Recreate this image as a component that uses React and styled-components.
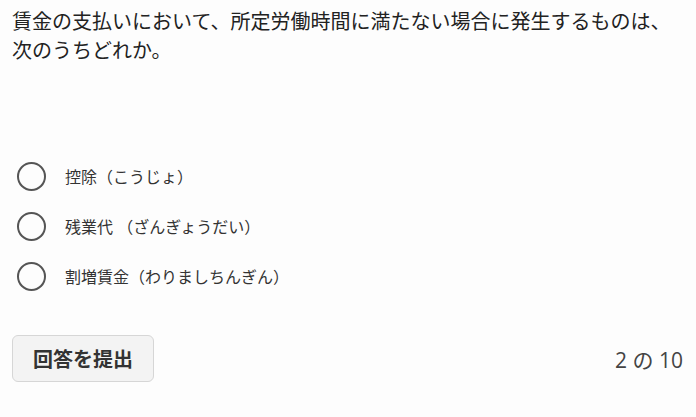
import React from "react"
import styled, { createGlobalStyle } from "styled-components"

const GlobalStyle = createGlobalStyle`
  html, body {
    margin: 0;
    padding: 0;
    background: #fdfdfd;
  }
  body {
    font-family: "Open Sans", "Noto Sans CJK JP", sans-serif;
    color: #222;
  }
`

const Page = styled.div`
  display: flex;
  flex-direction: column;
  padding: 7px 12px 0;
  min-height: 417px;
  box-sizing: border-box;
`

const Question = styled.p`
  margin: 0;
  font-size: 20px;
  line-height: 29px;
  color: #222;
`

const Options = styled.div`
  display: flex;
  flex-direction: column;
  margin-top: 86px;
`

const Option = styled.label`
  display: flex;
  align-items: center;
  gap: 19px;
  height: 50px;
  padding-left: 5px;
  cursor: pointer;
`

const Radio = styled.span`
  width: 29px;
  height: 29px;
  box-sizing: border-box;
  border: 2px solid #555;
  border-radius: 50%;
  flex-shrink: 0;
  background: ${props => (props.checked ? "radial-gradient(#555 40%, transparent 44%)" : "transparent")};
`

const OptionText = styled.span`
  font-size: 16px;
  color: #333;
`

const Footer = styled.div`
  display: flex;
  justify-content: space-between;
  align-items: center;
  margin-top: 34px;
`

const SubmitButton = styled.button`
  font-family: "Noto Sans CJK JP", "Noto Sans", sans-serif;
  font-size: 20px;
  font-weight: 700;
  color: #333;
  background: #f3f3f3;
  border: 1px solid #d6d6d6;
  border-radius: 6px;
  height: 47px;
  width: 142px;
  padding: 0;
  cursor: pointer;
`

const Progress = styled.span`
  font-size: 21px;
  color: #444;
  margin-right: 1px;
`

const choices = [
  "控除（こうじょ）",
  "残業代 （ざんぎょうだい）",
  "割増賃金（わりましちんぎん）",
]

export default function App() {
  const [selected, setSelected] = React.useState(null)

  return (
    <Page>
      <GlobalStyle />
      <Question>
        賃金の支払いにおいて、所定労働時間に満たない場合に発生するものは、次のうちどれか。
      </Question>
      <Options>
        {choices.map((c, i) => (
          <Option key={c} onClick={() => setSelected(i)}>
            <Radio checked={selected === i} />
            <OptionText>{c}</OptionText>
          </Option>
        ))}
      </Options>
      <Footer>
        <SubmitButton>回答を提出</SubmitButton>
        <Progress>2 の 10</Progress>
      </Footer>
    </Page>
  )
}
